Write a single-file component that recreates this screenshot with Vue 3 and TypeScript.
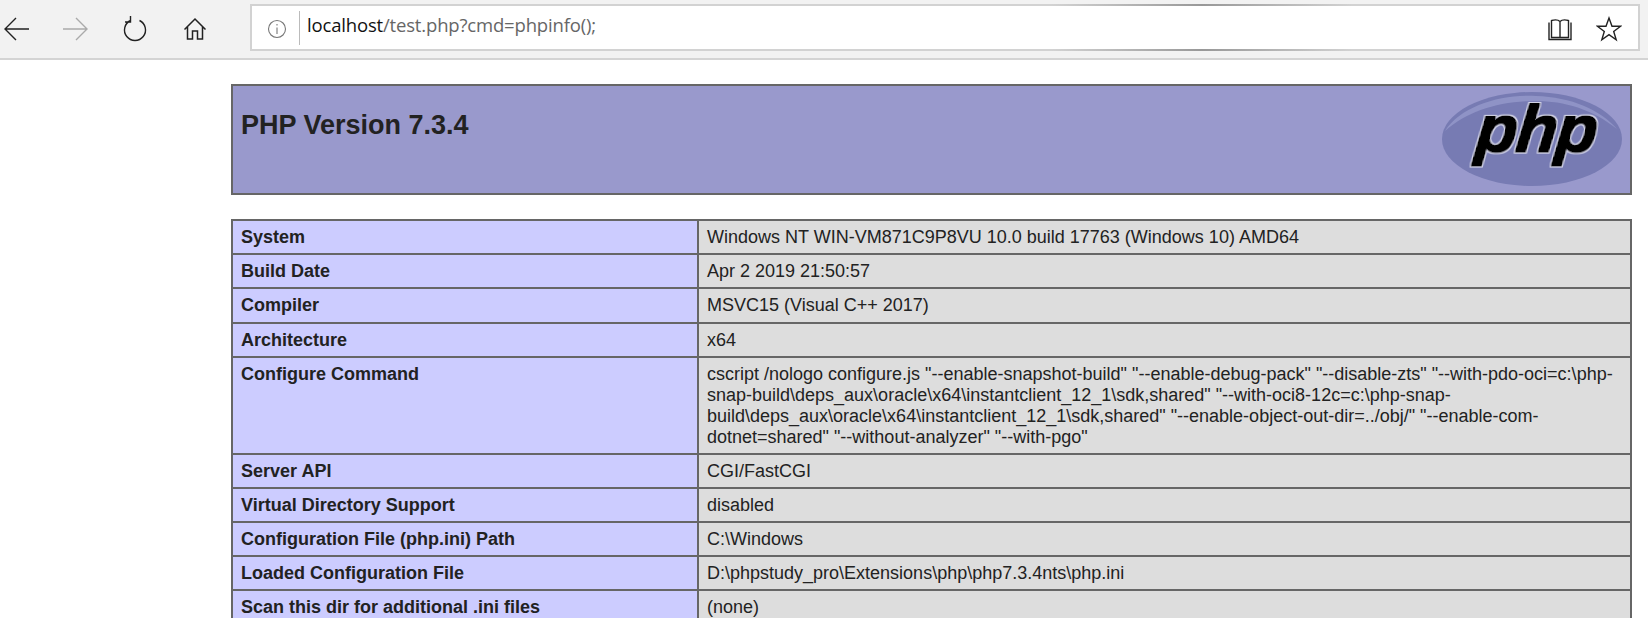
<script setup lang="ts">
interface Row { k: string; v: string }
const rows: Row[] = [
  { k: 'System', v: 'Windows NT WIN-VM871C9P8VU 10.0 build 17763 (Windows 10) AMD64' },
  { k: 'Build Date', v: 'Apr 2 2019 21:50:57' },
  { k: 'Compiler', v: 'MSVC15 (Visual C++ 2017)' },
  { k: 'Architecture', v: 'x64' },
  { k: 'Configure Command', v: 'cscript /nologo configure.js "--enable-snapshot-build" "--enable-debug-pack" "--disable-zts" "--with-pdo-oci=c:\\php-snap-build\\deps_aux\\oracle\\x64\\instantclient_12_1\\sdk,shared" "--with-oci8-12c=c:\\php-snap-build\\deps_aux\\oracle\\x64\\instantclient_12_1\\sdk,shared" "--enable-object-out-dir=../obj/" "--enable-com-dotnet=shared" "--without-analyzer" "--with-pgo"' },
  { k: 'Server API', v: 'CGI/FastCGI' },
  { k: 'Virtual Directory Support', v: 'disabled' },
  { k: 'Configuration File (php.ini) Path', v: 'C:\\Windows' },
  { k: 'Loaded Configuration File', v: 'D:\\phpstudy_pro\\Extensions\\php\\php7.3.4nts\\php.ini' },
  { k: 'Scan this dir for additional .ini files', v: '(none)' },
]
</script>

<template>
  <div class="page">
    <header class="toolbar">
      <nav class="nav">
        <svg class="ic" width="26" height="26" viewBox="0 0 26 26" fill="none" stroke="#222" stroke-width="1.4"><path d="M2 13H26M13 2 2 13 13 24" /></svg>
        <svg class="ic" width="26" height="26" viewBox="0 0 26 26" fill="none" stroke="#aaa" stroke-width="1.4"><path d="M0 13H24M13 2 24 13 13 24" /></svg>
        <svg class="ic" width="26" height="26" viewBox="0 0 26 26" fill="none" stroke="#222" stroke-width="1.4"><path d="M8.5 4.5A10.5 10.5 0 1 0 17.5 4.5M8.5 0V6H3" /></svg>
        <svg class="ic home" width="24" height="24" viewBox="0 0 24 24" fill="none" stroke="#222" stroke-width="1.5"><path d="M1.5 12.5 12 2 22.5 12.5M4.5 10V22H9.5V14H14.5V22H19.5V10" /></svg>
      </nav>
      <div class="address">
        <span class="glint top"></span>
        <span class="glint bottom"></span>
        <svg class="info" width="20" height="20" viewBox="0 0 20 20" fill="none" stroke="#777" stroke-width="1.1"><circle cx="10" cy="10" r="8.5" /><path d="M10 8.5V15M10 5V6.6" /></svg>
        <span class="sep"></span>
        <span class="url"><span class="host">localhost</span>/test.php?cmd=phpinfo();</span>
        <svg class="book" width="24" height="24" viewBox="0 0 24 24" fill="none" stroke="#222" stroke-width="1.4"><path d="M3.5 3V20.5H20.5V3M3.5 3.5C7 2.5 10 2.5 12 4.5 14 2.5 17 2.5 20.5 3.5M12 4.5V20.5M1 5.5V22.5H23V5.5" /></svg>
        <svg class="star" width="26" height="26" viewBox="0 0 26 26" fill="none" stroke="#222" stroke-width="1.4"><path d="M13 2 16 10.2H24.6L17.7 15.4 20.2 23.8 13 18.7 5.8 23.8 8.3 15.4 1.4 10.2H10Z" /></svg>
      </div>
    </header>

    <main class="content">
      <section class="banner">
        <h1 class="title">PHP Version 7.3.4</h1>
        <svg class="logo" width="182" height="96" viewBox="0 0 182 96">
          <defs>
            <filter id="php-edge" x="-10%" y="-10%" width="120%" height="120%">
              <feMorphology in="SourceAlpha" operator="dilate" radius="1.6" result="outer" />
              <feFlood flood-color="#d8d9ec" />
              <feComposite in2="outer" operator="in" result="edge" />
              <feMorphology in="SourceGraphic" operator="dilate" radius="0.7" result="bold" />
              <feMerge>
                <feMergeNode in="edge" />
                <feMergeNode in="bold" />
              </feMerge>
            </filter>
          </defs>
          <ellipse cx="91" cy="48" rx="90" ry="47" fill="#777bb3" />
          <path d="M4 40C20 15 60 3 95 5 130 6 160 19 176 38 150 17 120 9 90 10 55 11 25 21 4 40Z" fill="#8f93c6" />
          <text class="logo-text" x="100" y="61" text-anchor="middle" filter="url(#php-edge)" transform="skewX(-6)">php</text>
        </svg>
      </section>

      <table class="info-table">
        <colgroup><col class="c1" /><col /></colgroup>
        <tbody>
          <tr v-for="r in rows" :key="r.k">
            <td class="key">{{ r.k }}</td>
            <td class="val">{{ r.v }}</td>
          </tr>
        </tbody>
      </table>
    </main>
  </div>
</template>

<style>
html, body { margin: 0; background: #fff; overflow: hidden; }
</style>

<style scoped>
.page {
  width: 1648px;
  height: 618px;
  overflow: hidden;
  font-family: "Liberation Sans", Arial, sans-serif;
  color: #222;
}
.toolbar {
  display: flex;
  align-items: center;
  height: 58px;
  box-sizing: content-box;
  background: #f2f2f2;
  border-bottom: 2px solid #d4d4d4;
  padding-left: 3px;
}
.nav {
  display: flex;
  align-items: center;
  width: 247px;
  gap: 34px;
}
.nav .ic:nth-child(3) { margin-left: -1px; }
.nav .home { margin-left: 1px; }
.ic { flex: none; }
.address {
  position: relative;
  display: flex;
  align-items: center;
  box-sizing: border-box;
  width: 1390px;
  height: 47px;
  margin-top: -3px;
  background: #fff;
  border: 2px solid #d2d2d2;
  padding-left: 15px;
}
.glint {
  position: absolute;
  left: 800px;
  width: 300px;
  height: 2px;
  background: linear-gradient(90deg, #d2d2d2, #989898, #d2d2d2);
}
.glint.top { top: -2px; }
.glint.bottom { bottom: -2px; }
.info { flex: none; margin-top: 2px; }
.sep {
  width: 1px;
  height: 34px;
  margin-left: 12px;
  background: #bbb;
}
.url {
  flex: 1;
  margin-left: 7px;
  margin-top: -7px;
  font-family: "Open Sans", sans-serif;
  font-size: 18.5px;
  letter-spacing: -0.17px;
  color: #666;
  white-space: nowrap;
}
.host { color: #111; }
.book { flex: none; margin-right: 24px; margin-top: 2px; }
.star { flex: none; margin-right: 16px; margin-top: 2px; }
.content {
  width: 1401px;
  margin-left: 231px;
  padding-top: 24px;
}
.banner {
  display: flex;
  justify-content: space-between;
  box-sizing: border-box;
  height: 111px;
  background: #9999cc;
  border: 2px solid #666;
  padding: 0 7px 0 8px;
}
.title {
  margin: 23px 0 0;
  font-size: 27px;
  line-height: 32px;
  font-weight: 700;
  color: #222;
}
.logo { flex: none; margin-top: 5px; }
.logo-text {
  font-family: "Liberation Sans", sans-serif;
  font-size: 67px;
  font-weight: 700;
  font-style: italic;
  fill: #000;
  letter-spacing: -1px;
}
.info-table {
  width: 1401px;
  margin-top: 24px;
  table-layout: fixed;
  border-collapse: collapse;
  font-size: 18px;
  line-height: 21px;
  border: 2px solid #666;
}
.c1 { width: 466px; }
td {
  border: 2px solid #666;
  padding: 6px 8px 5px 8px;
  vertical-align: top;
}
tr:nth-child(3) td { padding-bottom: 6px; }
.key { background: #ccccff; font-weight: 700; }
.val { background: #dddddd; }
</style>
